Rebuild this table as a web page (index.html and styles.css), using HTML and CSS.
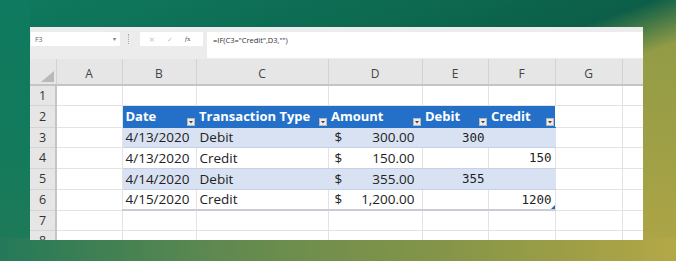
FILE: index.html
```html
<!DOCTYPE html>
<html>
<head>
<meta charset="utf-8">
<link rel="stylesheet" href="styles.css">
</head>
<body>
<div class="window">
  <div class="fbar">
    <div class="namebox"><span>F3</span><span class="nb-arrow">&#9662;</span></div>
    <div class="sep"></div>
    <div class="fxbox"><span class="x">&#10005;</span><span class="ok">&#10003;</span><span class="fx"><i>f</i>x</span></div>
    <div class="formula">=IF(C3="Credit",D3,"")</div>
  </div>
  <table class="grid">
    <colgroup>
      <col class="c-rh"><col class="c-a"><col class="c-b"><col class="c-c"><col class="c-d"><col class="c-e"><col class="c-f"><col class="c-g"><col class="c-h">
    </colgroup>
    <thead>
      <tr class="colhdr">
        <th class="corner"><svg width="13" height="11" viewBox="0 0 13 11"><polygon points="13,0 13,11 0,11" fill="#b9b9b9"/></svg></th>
        <th>A</th><th>B</th><th>C</th><th>D</th><th>E</th><th>F</th><th>G</th><th></th>
      </tr>
    </thead>
    <tbody>
      <tr class="h20"><th>1</th><td></td><td></td><td></td><td></td><td></td><td></td><td></td><td></td></tr>
      <tr class="h21"><th>2</th><td></td>
        <td class="tbh"><div class="hc"><span>Date</span><span class="flt"><svg width="8" height="8" viewBox="0 0 8 8"><rect x="0.5" y="0.5" width="7" height="7" fill="#ececec" stroke="#b8b8b8"/><polygon points="2,3 6,3 4,5.5" fill="#444"/></svg></span></div></td>
        <td class="tbh"><div class="hc"><span>Transaction Type</span><span class="flt"><svg width="8" height="8" viewBox="0 0 8 8"><rect x="0.5" y="0.5" width="7" height="7" fill="#ececec" stroke="#b8b8b8"/><polygon points="2,3 6,3 4,5.5" fill="#444"/></svg></span></div></td>
        <td class="tbh"><div class="hc"><span>Amount</span><span class="flt"><svg width="8" height="8" viewBox="0 0 8 8"><rect x="0.5" y="0.5" width="7" height="7" fill="#ececec" stroke="#b8b8b8"/><polygon points="2,3 6,3 4,5.5" fill="#444"/></svg></span></div></td>
        <td class="tbh"><div class="hc"><span>Debit</span><span class="flt"><svg width="8" height="8" viewBox="0 0 8 8"><rect x="0.5" y="0.5" width="7" height="7" fill="#ececec" stroke="#b8b8b8"/><polygon points="2,3 6,3 4,5.5" fill="#444"/></svg></span></div></td>
        <td class="tbh"><div class="hc"><span>Credit</span><span class="flt"><svg width="8" height="8" viewBox="0 0 8 8"><rect x="0.5" y="0.5" width="7" height="7" fill="#ececec" stroke="#b8b8b8"/><polygon points="2,3 6,3 4,5.5" fill="#444"/></svg></span></div></td>
        <td></td><td></td></tr>
      <tr class="h20 band"><th>3</th><td></td><td class="t">4/13/2020</td><td class="t">Debit</td><td class="t amt"><div class="ac"><span>$</span><span>300.00</span></div></td><td class="t num">300</td><td class="t num"></td><td></td><td></td></tr>
      <tr class="h21 plain"><th>4</th><td></td><td class="t">4/13/2020</td><td class="t">Credit</td><td class="t amt"><div class="ac"><span>$</span><span>150.00</span></div></td><td class="t num"></td><td class="t num">150</td><td></td><td></td></tr>
      <tr class="h21 band"><th>5</th><td></td><td class="t">4/14/2020</td><td class="t">Debit</td><td class="t amt"><div class="ac"><span>$</span><span>355.00</span></div></td><td class="t num">355</td><td class="t num"></td><td></td><td></td></tr>
      <tr class="h21 plain last"><th>6</th><td></td><td class="t">4/15/2020</td><td class="t">Credit</td><td class="t amt"><div class="ac"><span>$</span><span>1,200.00</span></div></td><td class="t num"></td><td class="t num corner-cell">1200<span class="handle"></span></td><td></td><td></td></tr>
      <tr class="h20"><th>7</th><td></td><td></td><td></td><td></td><td></td><td></td><td></td><td></td></tr>
      <tr class="h20"><th>8</th><td></td><td></td><td></td><td></td><td></td><td></td><td></td><td></td></tr>
    </tbody>
  </table>
</div>
</body>
</html>
```
FILE: styles.css
```css
html, body {
  margin: 0;
  padding: 0;
}
body {
  width: 676px;
  height: 261px;
  overflow: hidden;
  font-family: "Open Sans", sans-serif;
  background:
    linear-gradient(to right, #24795a 0%, #3f8053 15%, #5f8950 32%, #738f4c 48%, #859548 66%, #a09f46 86%, #b3a847 100%) 0 238px / 100% 23px no-repeat,
    linear-gradient(to bottom, #0f7a5f 0%, #137a5c 60%, #1d7a58 100%) 0 0 / 30px 240px no-repeat,
    linear-gradient(160deg, #0f7a5f 0%, #0d6a51 30%, #0c5e48 47%, rgba(12,94,72,0) 57%),
    linear-gradient(to bottom, #8c9a45 0%, #a0a046 60%, #b0a646 100%);
  padding: 27px 0 0 30px;
  box-sizing: border-box;
}
.window {
  width: 613px;
  height: 213px;
  background: #ededed;
  overflow: hidden;
}
.fbar {
  display: flex;
  align-items: flex-start;
  height: 32px;
  padding: 5px 0 0 1px;
  box-sizing: border-box;
  background: #ececec;
}
.namebox {
  width: 89px;
  height: 14px;
  background: #fff;
  display: flex;
  align-items: center;
  justify-content: space-between;
  padding: 0 4px 0 4px;
  box-sizing: border-box;
  font-size: 7px;
  color: #666;
}
.nb-arrow {
  font-size: 6px;
  color: #777;
}
.sep {
  width: 2px;
  height: 10px;
  margin: 2px 9px 0 8px;
  border-left: 1px dotted #aaa;
}
.fxbox {
  width: 63px;
  height: 14px;
  background: #fff;
  display: flex;
  align-items: center;
  padding-left: 9px;
  box-sizing: border-box;
  font-size: 7px;
  color: #c4c4c4;
  gap: 12px;
}
.fxbox .fx {
  color: #555;
  font-family: "Liberation Serif", serif;
  font-size: 7px;
}
.formula {
  flex: 1;
  margin-left: 4px;
  height: 26px;
  background: #fff;
  font-size: 7.5px;
  color: #333;
  padding: 3px 0 0 6px;
  box-sizing: border-box;
}
.grid {
  border-collapse: collapse;
  table-layout: fixed;
  width: 613px;
  background: #fff;
}
.c-rh { width: 26px; }
.c-a { width: 66px; }
.c-b { width: 74px; }
.c-c { width: 132px; }
.c-d { width: 94px; }
.c-e { width: 66px; }
.c-f { width: 67px; }
.c-g { width: 67px; }
.c-h { width: 21px; }
.grid td, .grid th {
  padding: 0;
  overflow: hidden;
  white-space: nowrap;
}
.grid td {
  border-right: 1px solid #e3e3e3;
  border-bottom: 1px solid #e3e3e3;
}
.colhdr th {
  height: 22px;
  background: #e6e6e6;
  border-right: 1px solid #d2d2d2;
  border-bottom: 2px solid #c4c4c4;
  font-weight: normal;
  font-size: 12px;
  color: #444;
  vertical-align: middle;
  padding-top: 3px;
  box-sizing: content-box;
}
.colhdr th.corner {
  text-align: right;
  vertical-align: bottom;
  padding: 0 2px 2px 0;
  line-height: 0;
}
tbody th {
  background: #e6e6e6;
  border-right: 2px solid #c4c4c4;
  border-bottom: 1px solid #d4d4d4;
  font-weight: normal;
  font-size: 12.5px;
  color: #333;
  text-align: center;
  padding-right: 2px;
}
.h20 { height: 20px; }
.h21 { height: 21px; }
td.tbh {
  background: #2470c8;
  border-right: none;
  border-bottom: 1px solid #2470c8;
  color: #fff;
  font-weight: bold;
  font-size: 13px;
}
.hc {
  display: flex;
  justify-content: space-between;
  align-items: flex-end;
  height: 21px;
  padding: 0 1px 0 3px;
}
.hc span:first-child {
  align-self: center;
}
.flt {
  line-height: 0;
  margin-bottom: 1px;
}
td.t {
  font-size: 13.5px;
  color: #222;
  padding: 0 3px;
}
td.amt {
  padding-left: 6px;
}
.band td.t {
  background: #d9e2f3;
  border-right-color: #d9e2f3;
  border-bottom: 1px solid #c3d1ea;
}
.plain td.t {
  border-bottom: 1px solid #c3d1ea;
}
.last td.t {
  border-bottom: 2px solid #c9ccd3;
}
.ac {
  display: flex;
  justify-content: space-between;
  padding-right: 4px;
}
td.num {
  font-family: "DejaVu Sans Mono", monospace;
  font-size: 12.5px;
  text-align: right;
  color: #222;
}
td.corner-cell {
  position: relative;
}
.handle {
  position: absolute;
  right: 0;
  bottom: 0;
  width: 0;
  height: 0;
  border-left: 4px solid transparent;
  border-bottom: 4px solid #2f5fa8;
}
```
